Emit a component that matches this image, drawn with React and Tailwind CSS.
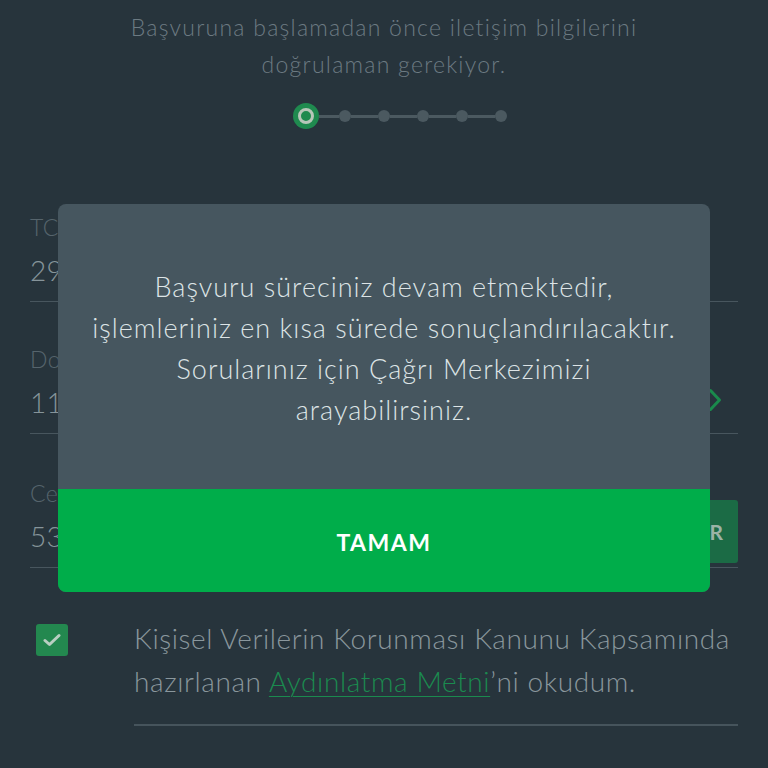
import React from 'react';

const dots = [1, 2, 3, 4, 5];

const Field = ({ label, value, children }) => (
  <div className="relative flex items-end gap-[12px] border-b border-[#48565e] pb-[14px]">
    <div className="flex-1">
      <div className="text-[23px] font-light leading-[30px] tracking-[0.5px] text-[#56646c]">{label}</div>
      <div className="mt-[11px] text-[28px] font-light leading-[34px] tracking-[0.3px] text-[#86949a]">{value}</div>
    </div>
    {children}
  </div>
);

const App = () => {
  return (
    <div className="relative h-[768px] w-[768px] overflow-hidden bg-[#27343c] font-['Lato',sans-serif]">
      <div className="pt-[9px] text-center text-[23px] font-light leading-[37px] tracking-[1.25px] text-[#6c7a82]">
        Başvuruna başlamadan önce iletişim bilgilerini
        <br />
        doğrulaman gerekiyor.
      </div>

      <div className="mt-[20px] flex items-center pl-[293px]">
        <div className="flex h-[26px] w-[26px] items-center justify-center rounded-full bg-[#1f8a4f]">
          <div className="h-[16px] w-[16px] rounded-full border-[3px] border-[#b7c6b9] bg-[#1f8a4f]" />
        </div>
        <div className="h-[3px] w-[20px] bg-[#4b5960]" />
        {dots.map((d, i) => (
          <React.Fragment key={d}>
            <div className="h-[12px] w-[12px] rounded-full bg-[#4b5960]" />
            {i < dots.length - 1 && <div className="h-[3px] w-[27px] bg-[#4b5960]" />}
          </React.Fragment>
        ))}
      </div>

      <div className="mt-[83px] flex flex-col gap-[42px] px-[30px]">
        <Field label="TC Kimlik Numarası" value="29" />
        <Field label="Doğum Tarihi" value="11/">
          <svg className="absolute right-[16px] top-[44px]" width="14" height="24" viewBox="0 0 14 24" fill="none">
            <path d="M2.5 2.5l9 9.5-9 9.5" stroke="#1a8a4c" strokeWidth="3" strokeLinecap="round" strokeLinejoin="round" />
          </svg>
        </Field>
        <div className="mt-[2px]">
          <div className="relative flex items-end gap-[12px] border-b border-[#48565e] pb-[4px]">
            <div className="flex-1 pb-[10px]">
              <div className="text-[23px] font-light leading-[30px] tracking-[0.5px] text-[#56646c]">Cep Telefonu</div>
              <div className="mt-[11px] text-[28px] font-light leading-[34px] tracking-[0.3px] text-[#86949a]">53</div>
            </div>
            <div className="flex h-[63px] w-[130px] items-center justify-end rounded-[3px] bg-[#1b6b45] pr-[15px] text-[21px] font-bold text-[#9bb2a6]">
              GÖNDER
            </div>
          </div>
        </div>
      </div>

      <div className="mt-[49px] flex gap-[66px] pl-[36px] pr-[30px]">
        <div className="mt-[7px] flex h-[32px] w-[32px] shrink-0 items-center justify-center rounded-[3px] bg-[#23884f]">
          <svg width="18" height="14" viewBox="0 0 18 14" fill="none">
            <path d="M2 7.5l4.5 4L16 2.5" stroke="#b9cfc2" strokeWidth="3" strokeLinecap="round" strokeLinejoin="round" />
          </svg>
        </div>
        <div className="flex-1">
          <div className="text-[28px] font-light leading-[43px] tracking-[0.6px] text-[#8a979d]">
            Kişisel Verilerin Korunması Kanunu Kapsamında hazırlanan{' '}
            <span className="text-[#1b8a4f] underline decoration-1 underline-offset-4">Aydınlatma Metni</span>’ni okudum.
          </div>
          <div className="mt-[21px] h-[2px] bg-[#46545c]" />
        </div>
      </div>

      <div className="absolute left-[58px] top-[204px] w-[652px] overflow-hidden rounded-[8px] bg-[#46565f]">
        <div className="flex h-[285px] items-center justify-center pt-[2px] text-center text-[27px] font-light leading-[41px] tracking-[1px] text-[#dde4e6]">
          <p>
            Başvuru süreciniz devam etmektedir,
            <br />
            işlemleriniz en kısa sürede sonuçlandırılacaktır.
            <br />
            Sorularınız için Çağrı Merkezimizi
            <br />
            arayabilirsiniz.
          </p>
        </div>
        <div className="flex h-[103px] items-center justify-center bg-[#00ad4a] pt-[3px] text-[23px] font-bold tracking-[1.5px] text-white">
          TAMAM
        </div>
      </div>
    </div>
  );
};

export default App;
